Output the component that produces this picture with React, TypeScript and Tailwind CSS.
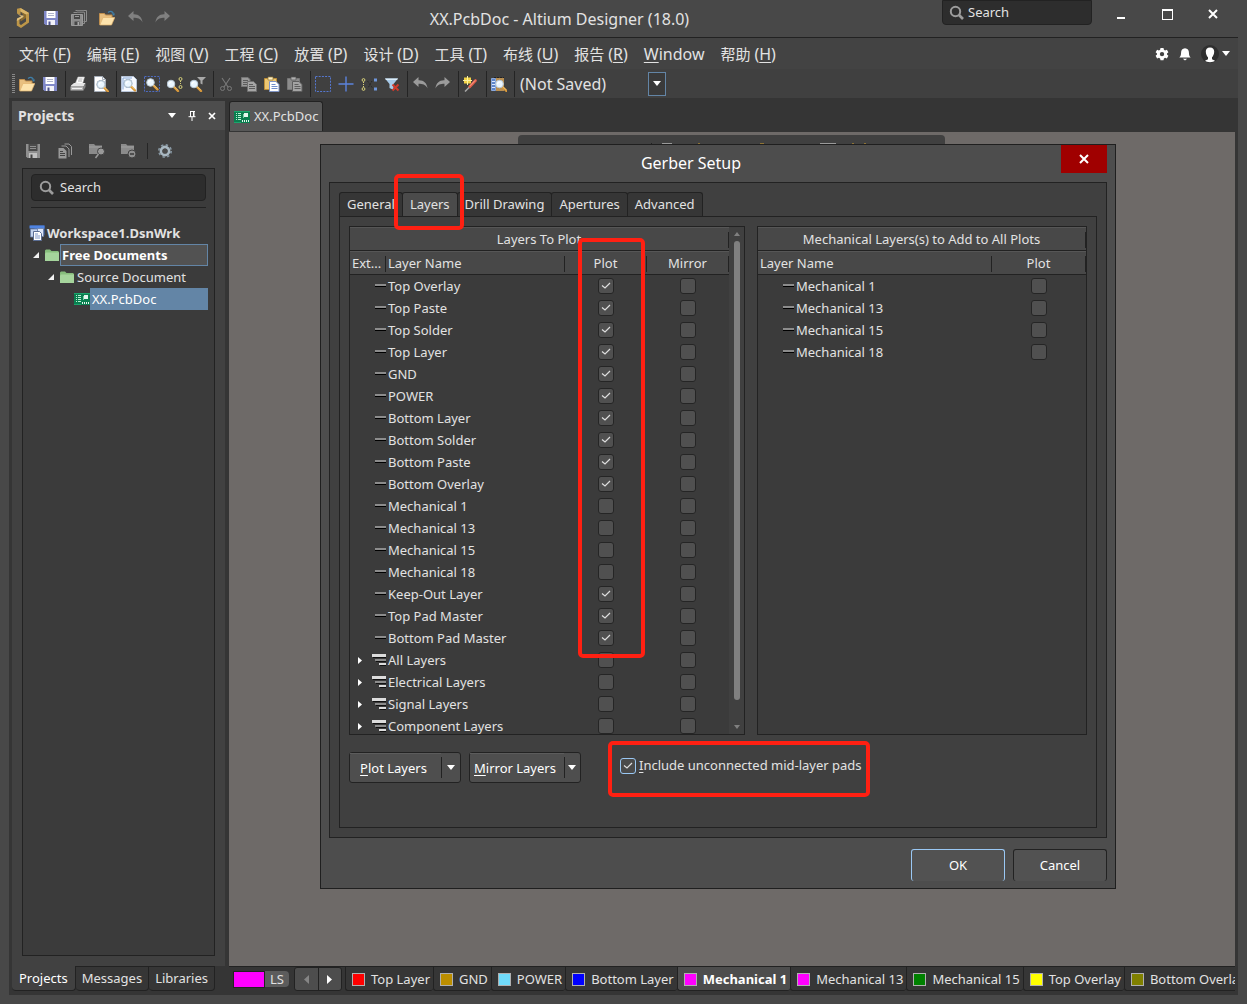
import { useState } from 'react'
import type { ReactNode } from 'react'
import clsx from 'clsx'

type Layer = { name: string; plot?: boolean; group?: boolean }

const layers: Layer[] = [
  { name: 'Top Overlay', plot: true },
  { name: 'Top Paste', plot: true },
  { name: 'Top Solder', plot: true },
  { name: 'Top Layer', plot: true },
  { name: 'GND', plot: true },
  { name: 'POWER', plot: true },
  { name: 'Bottom Layer', plot: true },
  { name: 'Bottom Solder', plot: true },
  { name: 'Bottom Paste', plot: true },
  { name: 'Bottom Overlay', plot: true },
  { name: 'Mechanical 1' },
  { name: 'Mechanical 13' },
  { name: 'Mechanical 15' },
  { name: 'Mechanical 18' },
  { name: 'Keep-Out Layer', plot: true },
  { name: 'Top Pad Master', plot: true },
  { name: 'Bottom Pad Master', plot: true },
  { name: 'All Layers', group: true },
  { name: 'Electrical Layers', group: true },
  { name: 'Signal Layers', group: true },
  { name: 'Component Layers', group: true },
]

const mechanical = ['Mechanical 1', 'Mechanical 13', 'Mechanical 15', 'Mechanical 18']

const menus = [
  ['文件', 'F'],
  ['编辑', 'E'],
  ['视图', 'V'],
  ['工程', 'C'],
  ['放置', 'P'],
  ['设计', 'D'],
  ['工具', 'T'],
  ['布线', 'U'],
  ['报告', 'R'],
  ['', 'Window'],
  ['帮助', 'H'],
]

const layerTabs = [
  { name: 'Top Layer', color: 'bg-[#ff0000]' },
  { name: 'GND', color: 'bg-[#bc8e00]' },
  { name: 'POWER', color: 'bg-[#70dbfa]' },
  { name: 'Bottom Layer', color: 'bg-[#0000ff]' },
  { name: 'Mechanical 1', color: 'bg-[#ff00ff]' },
  { name: 'Mechanical 13', color: 'bg-[#ff00ff]' },
  { name: 'Mechanical 15', color: 'bg-[#008000]' },
  { name: 'Top Overlay', color: 'bg-[#ffff00]' },
  { name: 'Bottom Overlay', color: 'bg-[#808000]' },
]

/* ---------- icons ---------- */

function Svg({ children, size = 16 }: { children: ReactNode; size?: number }) {
  return (
    <svg width={size} height={size} viewBox="0 0 16 16" fill="none" className="shrink-0" aria-hidden="true">
      {children}
    </svg>
  )
}

const Logo = () => (
  <svg width="14" height="20" viewBox="0 0 14 20" fill="none" aria-hidden="true">
    <path d="M1 .8L4.500 0 13 5v9.500L5 20 .8 17.500v-5L3.500 11v5L5 17l5-3.500V6.500L4.500 3.500V7L1 5.500z" fill="#bd9648" />
    <path d="M4.500 3.500l5.500 3v3.500L4.500 13.500v-2.500l3-2V7.500z" fill="#8a6a2c" />
    <path d="M1 5.500l3.500 1.700 3 .3v1.500l-4 2.500-2.700 1.500L1 10.500 5 8.500z" fill="#e3c27c" />
    <path d="M4.500 0L13 5l-3 1.500-5.500-3z" fill="#dab66a" />
  </svg>
)

const SaveIcon = ({ gray }: { gray?: boolean }) => (
  <Svg>
    <path d="M1 1h14v14H2.500L1 13.500z" fill={gray ? '#8f8f8f' : '#8088c8'} />
    <path d="M3.500 1h9v7h-9z" fill={gray ? '#4a4a4a' : '#fff'} />
    <path d="M5 3.500h6M5 5.500h6" stroke={gray ? '#8f8f8f' : '#b0b4cc'} />
    <path d="M4 10h8v5H4z" fill={gray ? '#c0c0c0' : '#f2f2f8'} />
    <path d="M5.500 11.500h2V15h-2z" fill={gray ? '#444' : '#4c528c'} />
  </Svg>
)

const SaveAllIcon = () => (
  <Svg>
    <path d="M4.500.5h11v11h-3" stroke="#8c8c8c" />
    <path d="M2.500 2.500h11v11h-2" stroke="#8c8c8c" />
    <path d="M6 2.500h7M6 1h7" stroke="#777" />
    <path d="M.5 4.500h11v11h-11z" fill="#8c8c8c" stroke="#9a9a9a" />
    <path d="M3 5h6v4H3zM3.500 11.500h5V15h-5z" fill="#474747" />
    <path d="M4 6.500h4" stroke="#999" />
    <path d="M6.500 12h1.500v3H6.500z" fill="#aaa" />
  </Svg>
)

const OpenIcon = () => (
  <Svg>
    <path d="M.5 14.500v-11h5l1 1.500h6.500v3" fill="#e8bf80" stroke="#c08f4e" />
    <path d="M.8 15L4 7.500h11.800L12.500 15z" fill="#fde3ad" stroke="#e2b56e" strokeWidth=".7" />
    <path d="M9 2.500Q12.500 0 14.500 3.500" stroke="#3f7ea8" strokeWidth="1.300" />
    <path d="M12.500 3.500h3.500L15 6z" fill="#3f7ea8" />
  </Svg>
)

const UndoIcon = ({ flip, light }: { flip?: boolean; light?: boolean }) => (
  <Svg>
    <g transform={flip ? 'matrix(-1 0 0 1 16 0)' : undefined}>
      <path d="M1 6L6.500 1v3.300C11.500 4 15 7 15.500 12.500 13.500 8.500 10.500 7.800 6.500 7.800V11z" fill={light ? '#9b9b9b' : '#808080'} />
    </g>
  </Svg>
)

const PrintIcon = () => (
  <Svg>
    <path d="M5.500 7L8 1h6.500l-2 7z" fill="#fff" stroke="#bbb" strokeWidth=".6" />
    <path d="M8.500 3h4M8 5h4" stroke="#999" strokeWidth=".8" />
    <path d="M1 9.500L4 7h11.500l-2 3.500H1z" fill="#e6e6e6" />
    <path d="M.5 10.500h13v4H.5z" fill="#b4b4b4" />
    <path d="M13.500 10.500l2-3.500v4l-2 3.500z" fill="#858585" />
    <path d="M2 12.500h10" stroke="#f2f2f2" />
  </Svg>
)

const Lens = ({ x = 0, y = 0 }: { x?: number; y?: number }) => (
  <g transform={`translate(${x} ${y})`}>
    <path d="M8 8l4.500 4.500" stroke="#d8993c" strokeWidth="2.400" strokeLinecap="round" />
    <path d="M8.500 7.800l3.500 3.500" stroke="#f4cf80" strokeWidth=".8" />
    <circle cx="5.500" cy="5.500" r="3.800" fill="#eaf6ff" stroke="#b9c9d6" strokeWidth="1" />
    <path d="M3.500 5.500q.5-2 2.500-2" stroke="#fff" strokeWidth="1.200" />
  </g>
)

const PreviewIcon = () => (
  <Svg>
    <path d="M1.500.5h8l3 3v12h-11z" fill="#fff" stroke="#a5adb8" />
    <path d="M9.500.5v3h3" stroke="#a5adb8" />
    <circle cx="8" cy="8.500" r="4.500" fill="#8d9bab" />
    <Lens x={2.500} y={3} />
  </Svg>
)

const ZoomFitIcon = () => (
  <Svg>
    <path d="M.5.5h12l3 3v12H.5z" fill="#f5f9ff" stroke="#b7c4d8" />
    <path d="M2 13.500V2h9" stroke="#86a7d8" />
    <circle cx="7" cy="7.500" r="4.500" fill="#8fa4bd" />
    <Lens x={1.500} y={2} />
  </Svg>
)

const ZoomAreaIcon = () => (
  <Svg>
    <path d="M.5.5h15v15H.5z" stroke="#4d6bc0" strokeDasharray="2 1.200" />
    <Lens x={1} y={1} />
  </Svg>
)

const ZoomSelectedIcon = () => (
  <Svg>
    <Lens x={-1.500} y={2.500} />
    <circle cx="13.500" cy="3" r="1.500" stroke="#d9d27a" />
    <circle cx="13.500" cy="11" r="1.500" stroke="#d9d27a" />
    <path d="M13.500 5v4" stroke="#d9d27a" strokeDasharray="1 1" />
  </Svg>
)

const ZoomFilterIcon = () => (
  <Svg>
    <Lens x={-1.500} y={2.500} />
    <path d="M7 1h9l-3.500 3.500v4l-2-1v-3z" fill="#a9a9a9" />
  </Svg>
)

const CutIcon = () => (
  <Svg>
    <path d="M4 2l6 9M12 2L6 11" stroke="#7a7a7a" strokeWidth="1.100" />
    <circle cx="4.500" cy="12.500" r="2" stroke="#7a7a7a" />
    <circle cx="11.500" cy="12.500" r="2" stroke="#7a7a7a" />
  </Svg>
)

const CopyIcon = () => (
  <Svg>
    <path d="M.5 1.500h6.500l2 2v7H.5z" fill="#9a9a9a" stroke="#777" />
    <path d="M2 4.500h5M2 6.500h5M2 8.500h4" stroke="#5c5c5c" />
    <path d="M6.500 5.500h6l3 3v7h-9z" fill="#a6a6a6" stroke="#707070" />
    <path d="M8 8.500h4M8 10.500h6M8 12.500h6" stroke="#5c5c5c" />
  </Svg>
)

const PasteIcon = ({ gray }: { gray?: boolean }) => (
  <Svg>
    <path d="M.5 2.500h12v11H.5z" fill={gray ? '#8c8c8c' : '#edc772'} stroke={gray ? '#777' : '#bd8f38'} />
    <path d="M4 1h5v3H4z" fill={gray ? '#b0b0b0' : '#fff3c8'} stroke={gray ? '#555' : '#8f7434'} strokeWidth=".7" />
    <path d="M5.500 5.500h6.500l3 3v7H5.500z" fill={gray ? '#a4a4a4' : '#fff'} stroke={gray ? '#5e5e5e' : '#7f94c4'} />
    <path d="M7.500 8.500h4M7.500 10.500h6M7.500 12.500h6" stroke={gray ? '#5e5e5e' : '#6f8dcb'} />
  </Svg>
)

const MarqueeIcon = () => (
  <Svg>
    <path d="M.5.5h15v15H.5z" stroke="#5577cf" strokeDasharray="2 1.200" />
  </Svg>
)

const CrossIcon = () => (
  <Svg>
    <path d="M8 .5v15M.5 8h15" stroke="#5b82dc" strokeWidth="1.400" />
  </Svg>
)

const NetsIcon = () => (
  <Svg>
    <circle cx="2.500" cy="4" r="1.400" stroke="#d9d27a" />
    <circle cx="2.500" cy="13" r="1.400" stroke="#d9d27a" />
    <path d="M2.500 6v5" stroke="#d9d27a" strokeDasharray="1 1" />
    <path d="M6.500 5l5 7M11 5l-4 7" stroke="#222" strokeDasharray="1 1" />
    <path d="M13 2.500h3v3h-3zM13 11.500h3v3h-3z" fill="#6e95da" />
  </Svg>
)

const ClearFilterIcon = () => (
  <Svg>
    <path d="M1 2.500h13L9.500 8v6l-4-2V8z" fill="#a8cbea" />
    <path d="M1 2.500h13l-1 1.500H2z" fill="#dceefb" />
    <path d="M8.500 8.500l6 6M14.500 8.500l-6 6" stroke="#d03a2c" strokeWidth="2" />
  </Svg>
)

const WandIcon = () => (
  <Svg>
    <path d="M1 1.500h7v6H1z" fill="#f3d445" />
    <path d="M4.500 0v9M0 4.500h9" stroke="#fff3a0" />
    <path d="M12.500 4.500L6.500 11" stroke="#e2604a" strokeWidth="2.600" strokeLinecap="round" />
    <path d="M6 11.500L2 15.500" stroke="#a8a8a8" strokeWidth="1.500" />
    <path d="M12 4.500L7 9.800" stroke="#f6a08e" />
  </Svg>
)

const BrowseIcon = () => (
  <Svg>
    <path d="M.5 2.500h4v12h-4z" fill="#5f86c9" stroke="#89a8dd" />
    <path d="M1 5.500h3M1 8.500h3M1 11.500h3" stroke="#dce8ff" />
    <path d="M5 2h8v13H5z" fill="#b98f52" />
    <path d="M3 1.500h10" stroke="#222" strokeDasharray="2 1" />
    <Lens x={3} y={2.500} />
  </Svg>
)

const PcbIcon = () => (
  <svg width="16" height="12" viewBox="0 0 16 12" className="shrink-0" aria-hidden="true">
    <path d="M0 0h16v12H0z" fill="#0a7f50" />
    <path d="M0 0h16v1H0zM0 11h7v1H0z" fill="#1aa56c" />
    <path d="M2 2.500h1M2 4.500h1M2 6.500h1M2 8.500h1M4 2.500h3M4 4.500h3M4 6.500h3M4 8.500h3" stroke="#b7f3d3" strokeWidth="1" />
    <path d="M10 2h4v4h-4z" fill="#e4f7ee" />
    <path d="M9 3h1v4H9z" fill="#7bd0a8" />
    <path d="M8.500 9v2M10.500 9v2M12.500 9v2M14.500 9v2" stroke="#e4f7ee" />
  </svg>
)

const FolderIcon = () => (
  <svg width="14" height="12" viewBox="0 0 14 12" className="shrink-0" aria-hidden="true">
    <path d="M0 1.500L1 .5h4L6.500 2H13l1 1v9H0z" fill="#86bd7c" />
    <path d="M1 3.500h13V12H0V4.500z" fill="#a5d49c" />
  </svg>
)

const WorkspaceIcon = () => (
  <Svg>
    <path d="M1 .5h14.500v10" fill="#3a66b8" />
    <path d="M.5.5h15v3H.5z" fill="#4f83e0" />
    <path d="M1.500 4h7v8h-7z" fill="#c3d3ee" stroke="#6b80a8" strokeWidth=".8" />
    <path d="M8.500 3.500h6v8h-6z" fill="#dbe5f7" stroke="#6b80a8" strokeWidth=".8" />
    <path d="M4.500 6.500h6l2 2v7h-8z" fill="#fff" stroke="#5a6d94" />
    <path d="M6 9h3M6 11h5M6 13h5" stroke="#7c95c7" />
  </Svg>
)

const DocsIcon = () => (
  <Svg>
    <path d="M7.500 1h4.500l2.500 2.500V12" stroke="#999" />
    <path d="M4.500 3h4.500l3 3v8" stroke="#999" />
    <path d="M1.500 5h5l3 3v7.500h-8z" fill="#999" />
    <path d="M3 8.500h3M3 10.500h5M3 12.500h5" stroke="#444" />
  </Svg>
)

const FolderToolIcon = ({ gear }: { gear?: boolean }) => (
  <Svg>
    <path d="M0 1h5l1.500 1.500H13V11H0z" fill="#8b8b8b" />
    <path d="M0 4h13" stroke="#a0a0a0" />
    {gear ? (
      <>
        <circle cx="11" cy="11" r="4" fill="#8f8f8f" stroke="#414141" />
        <path d="M9 11h4" stroke="#333" strokeWidth="1.400" />
      </>
    ) : (
      <>
        <circle cx="12" cy="8.500" r="3.500" fill="#999" stroke="#414141" />
        <path d="M9.500 11L6.500 15" stroke="#999" strokeWidth="1.600" />
      </>
    )}
  </Svg>
)

const GearIcon = () => (
  <Svg>
    <circle cx="8" cy="8" r="6.200" stroke="#8797a2" strokeWidth="1.600" strokeDasharray="2.435" />
    <circle cx="8" cy="8" r="4" stroke="#a9b8c2" strokeWidth="2.800" />
    <circle cx="8" cy="8" r="2.600" fill="#4a4a4a" />
  </Svg>
)

const CogIcon = () => (
  <Svg size={14}>
    <path
      d="M6.300 1h3.400l.5 2.100 1.300.8 2.100-.7 1.700 2.900L13.700 7.500v1.200l1.600 1.400-1.700 2.900-2.100-.7-1.300.8-.5 2.100H6.300l-.5-2.100-1.300-.8-2.100.7L.7 10.100l1.600-1.400V7.500L.7 6.100l1.700-2.900 2.100.7 1.300-.8z"
      fill="#fff"
    />
    <circle cx="8" cy="8.100" r="2.500" fill="#424242" />
  </Svg>
)

const BellIcon = () => (
  <Svg size={14}>
    <path d="M8 1.500c3 0 4.500 2.500 4.500 5 0 3 .8 4 2 5.500h-13c1.200-1.500 2-2.500 2-5.500 0-2.500 1.500-5 4.500-5z" fill="#fff" />
    <path d="M5.500 13.500h5L8 15.500z" fill="#fff" />
  </Svg>
)

const AvatarIcon = () => (
  <svg width="18" height="18" viewBox="0 0 18 18" aria-hidden="true">
    <circle cx="9" cy="9" r="9" fill="#2f2f2f" />
    <path d="M9 2.500c3 0 4.200 1.700 4.200 4 0 2.600-1.200 5-2.200 5.700v2l3 1.600c-1.500 1.800-8.500 1.800-10 0l3-1.600v-2C6 11.500 4.800 9.100 4.800 6.500c0-2.300 1.200-4 4.200-4z" fill="#fff" />
  </svg>
)

const SearchIcon = () => (
  <Svg>
    <circle cx="6.500" cy="6.500" r="4.700" stroke="#9c9c9c" strokeWidth="2" />
    <path d="M10 10l4 4" stroke="#9c9c9c" strokeWidth="2.600" />
  </Svg>
)

const CloseIcon = () => (
  <svg width="10" height="10" viewBox="0 0 10 10" aria-hidden="true">
    <path d="M1 1l8 8M9 1L1 9" stroke="#fff" strokeWidth="2" />
  </svg>
)

const SmallCloseIcon = () => (
  <svg width="8" height="8" viewBox="0 0 8 8" aria-hidden="true">
    <path d="M1 1l6 6M7 1L1 7" stroke="#fff" strokeWidth="1.700" />
  </svg>
)

const PinIcon = () => (
  <svg width="8" height="10" viewBox="0 0 8 10" aria-hidden="true">
    <path d="M2 .5h5M2.500 0v6M5.500 0v6M.5 5.700h7M4 6v4" stroke="#fff" />
    <path d="M5 0h1.500v6H5z" fill="#fff" />
  </svg>
)

const CaretDown = () => (
  <svg width="8" height="5" viewBox="0 0 8 5" className="shrink-0" aria-hidden="true">
    <path d="M0 0h8L4 5z" fill="#fff" />
  </svg>
)

const CaretOpen = () => (
  <svg width="6" height="6" viewBox="0 0 6 6" className="shrink-0" aria-hidden="true">
    <path d="M6 0v6H0z" fill="#f2f2f2" />
  </svg>
)

const CaretRight = () => (
  <svg width="4" height="7" viewBox="0 0 4 7" className="shrink-0" aria-hidden="true">
    <path d="M0 0l4 3.500L0 7z" fill="#fff" />
  </svg>
)

const NavArrow = ({ back }: { back?: boolean }) => (
  <svg width="5" height="9" viewBox="0 0 5 9" className="shrink-0" aria-hidden="true">
    <path d={back ? 'M5 0L0 4.500 5 9z' : 'M0 0l5 4.500L0 9z'} fill={back ? '#858585' : '#fff'} />
  </svg>
)

const ScrollArrow = ({ up }: { up?: boolean }) => (
  <svg width="6" height="4" viewBox="0 0 6 4" className="shrink-0" aria-hidden="true">
    <path d={up ? 'M0 4h6L3 0z' : 'M0 0h6L3 4z'} fill="#808080" />
  </svg>
)

const LayerIcon = () => (
  <svg width="14" height="12" viewBox="0 0 14 12" className="shrink-0" aria-hidden="true">
    <path d="M3 4h11v2H3z" fill="#8c8c8c" />
    <path d="M3 6h11v1H3z" fill="#000" />
  </svg>
)

const LayerGroupIcon = () => (
  <svg width="14" height="12" viewBox="0 0 14 12" className="shrink-0" aria-hidden="true">
    <path d="M0 0h14v3H0zM7 9h7v2H7z" fill="#dcdcdc" />
    <path d="M3 5h11v2H3z" fill="#8c8c8c" />
    <path d="M1 3h13v1H1zM4 7h10v1H4zM8 11h6v1H8z" fill="#111" />
  </svg>
)

/* ---------- shared controls ---------- */

function ToolGroup({ items }: { items: [string, ReactNode][] }) {
  return (
    <>
      {items.map(([label, icon]) => (
        <button key={label} aria-label={label} className="flex h-6 w-[23px] items-center justify-center">
          {icon}
        </button>
      ))}
      <span className="ml-1 h-[26px] w-px bg-[#242424]" />
    </>
  )
}

function Check({ label, id, checked, focused }: { label?: string; id?: string; checked?: boolean; focused?: boolean }) {
  return (
    <span className="inline-grid size-4 shrink-0 align-top">
      <input
        id={id}
        type="checkbox"
        aria-label={label}
        defaultChecked={checked}
        className={clsx(
          'peer col-start-1 row-start-1 m-0 size-4 appearance-none rounded-[3px] border',
          focused ? 'border-[#9ac8f4] bg-[#4a4a4a]' : 'border-[#252525] bg-[#505050]',
        )}
      />
      <svg viewBox="0 0 16 16" className="pointer-events-none invisible col-start-1 row-start-1 size-4 peer-checked:visible" fill="none" aria-hidden="true">
        <path d="M4 7.500l3 2.500 5-5" stroke="#dedede" strokeWidth="1.200" />
      </svg>
    </span>
  )
}

function HeadCell({ children, center }: { children: ReactNode; center?: boolean }) {
  return (
    <div className="flex h-[23px] items-center border-t border-[#565656] pt-px">
      <span className={clsx('min-w-0 flex-1 whitespace-nowrap', center ? 'text-center' : 'pl-0.5')}>{children}</span>
      <span className="h-4 w-px bg-[#222]" />
    </div>
  )
}

function SearchBox({ id, className }: { id: string; className: string }) {
  return (
    <label htmlFor={id} className={clsx('flex items-center border border-[#222] bg-[#2d2d2d]', className)}>
      <SearchIcon />
      <input id={id} aria-label="Search" placeholder="Search" className="w-0 flex-1 bg-transparent outline-none placeholder:text-[#e2e2e2]" />
    </label>
  )
}

function SplitButton({ hot, rest }: { hot: string; rest: string }) {
  return (
    <div className="flex h-[31px] w-28 rounded-[3px] border border-[#222] bg-[#4e4e4e] text-white">
      <button className="flex-1 whitespace-nowrap border-t border-[#5c5c5c] pt-px pr-2 pl-1">
        <u className="underline-offset-2">{hot}</u>
        {rest}
      </button>
      <button aria-label={`${hot}${rest} options`} className="my-1 flex w-[19px] items-center justify-center border-l border-[#222] pr-px">
        <CaretDown />
      </button>
    </div>
  )
}

/* ---------- window parts ---------- */

function TitleBar() {
  const actions: [string, ReactNode][] = [
    ['Altium', <Logo />],
    ['Save', <SaveIcon />],
    ['Save all', <SaveAllIcon />],
    ['Open', <OpenIcon />],
    ['Undo', <UndoIcon />],
    ['Redo', <UndoIcon flip />],
  ]
  return (
    <header className="flex h-[37px] shrink-0 items-start pr-0.5">
      {actions.map(([label, icon]) => (
        <button key={label} aria-label={label} className="flex h-9 w-7 shrink-0 items-center justify-center">
          {icon}
        </button>
      ))}
      <h1 className="flex-1 truncate pt-[7px] text-center text-base leading-6">XX.PcbDoc - Altium Designer (18.0)</h1>
      <SearchBox id="global-search" className="h-[25px] w-[150px] gap-[3px] rounded-b px-1.5" />
      <div className="ml-1.5 flex">
        <button aria-label="Minimize" className="flex h-7 w-[46px] items-center justify-center pt-2">
          <span className="h-0.5 w-2 bg-white" />
        </button>
        <button aria-label="Maximize" className="flex h-7 w-[46px] items-center justify-center">
          <span className="h-[11px] w-[11px] border border-t-2 border-white" />
        </button>
        <button aria-label="Close" className="flex h-7 w-[46px] items-center justify-center">
          <CloseIcon />
        </button>
      </div>
    </header>
  )
}

function MenuBar() {
  return (
    <nav className="flex h-[31px] shrink-0 items-center gap-4 bg-[#434343] pr-2 pl-2.5 text-base">
      {menus.map(([name, key]) => (
        <button key={key} className="whitespace-nowrap">
          {name ? (
            <>
              <span className="text-[15px]">{name} </span>(<u className="underline-offset-2">{key}</u>)
            </>
          ) : (
            <>
              <u className="underline-offset-2">{key[0]}</u>
              {key.slice(1)}
            </>
          )}
        </button>
      ))}
      <div className="ml-auto flex items-center gap-[9px]">
        <button aria-label="Settings"><CogIcon /></button>
        <button aria-label="Notifications"><BellIcon /></button>
        <button aria-label="Account" className="flex items-center gap-[3px]">
          <AvatarIcon />
          <CaretDown />
        </button>
      </div>
    </nav>
  )
}

function Toolbar() {
  return (
    <div className="flex h-[29px] shrink-0 items-center bg-[#404040]">
      <span className="ml-[3px] h-5 w-[3px] shrink-0 bg-[repeating-linear-gradient(#888_0_1px,transparent_1px_2px)]" />
      <ToolGroup items={[['Open file', <OpenIcon />], ['Save file', <SaveIcon />]]} />
      <ToolGroup items={[['Print', <PrintIcon />], ['Print preview', <PreviewIcon />]]} />
      <ToolGroup
        items={[
          ['Fit document', <ZoomFitIcon />],
          ['Zoom area', <ZoomAreaIcon />],
          ['Zoom selected', <ZoomSelectedIcon />],
          ['Zoom filtered', <ZoomFilterIcon />],
        ]}
      />
      <ToolGroup
        items={[
          ['Cut', <CutIcon />],
          ['Copy', <CopyIcon />],
          ['Paste', <PasteIcon />],
          ['Paste special', <PasteIcon gray />],
        ]}
      />
      <ToolGroup
        items={[
          ['Select area', <MarqueeIcon />],
          ['Move', <CrossIcon />],
          ['Deselect', <NetsIcon />],
          ['Clear filter', <ClearFilterIcon />],
        ]}
      />
      <ToolGroup items={[['Undo edit', <UndoIcon light />], ['Redo edit', <UndoIcon flip light />]]} />
      <ToolGroup items={[['Cross probe', <WandIcon />]]} />
      <ToolGroup items={[['Browse', <BrowseIcon />]]} />
      <label className="ml-[5px] grid w-[146px] items-center">
        <select aria-label="Saved view" className="col-start-1 row-start-1 h-6 appearance-none bg-transparent text-base leading-6 outline-none">
          <option>(Not Saved)</option>
        </select>
        <span className="pointer-events-none col-start-1 row-start-1 flex h-6 w-[18px] items-center justify-center justify-self-end border border-[#6385a6] bg-[#3a3a3a]">
          <CaretDown />
        </span>
      </label>
    </div>
  )
}

function ProjectsPanel() {
  return (
    <aside className="flex w-[213px] shrink-0 flex-col">
      <div className="flex flex-1 flex-col bg-[#414141]">
        <div className="flex h-[29px] items-center bg-[#4d4d4d] pr-[9px] pl-1.5">
          <h2 className="flex-1 text-sm font-bold">Projects</h2>
          <div className="flex items-center gap-3">
            <button aria-label="Panel menu"><CaretDown /></button>
            <button aria-label="Pin panel"><PinIcon /></button>
            <button aria-label="Close panel"><SmallCloseIcon /></button>
          </div>
        </div>
        <div className="flex h-[38px] items-center pt-1 pl-[13px]">
          <button aria-label="Save project" className="mr-4"><SaveIcon gray /></button>
          <button aria-label="Compile" className="mr-4"><DocsIcon /></button>
          <button aria-label="Explore folder" className="mr-4"><FolderToolIcon /></button>
          <button aria-label="Folder options" className="mr-2.5"><FolderToolIcon gear /></button>
          <span className="mr-[9px] h-4 w-px bg-[#262626]" />
          <button aria-label="Panel settings"><GearIcon /></button>
        </div>
        <div className="mx-2.5 mb-2.5 flex-1 border border-[#222] bg-[#3b3b3b] pt-[5px]">
          <div className="mx-2 border-b border-[#222] pb-1.5">
            <SearchBox id="project-search" className="h-[27px] gap-[5px] rounded px-[7px]" />
          </div>
          <ul className="mt-3.5 mr-1.5 text-[13px] leading-[22px] whitespace-nowrap">
            <li className="flex h-[22px] items-center gap-0.5 pl-1.5 font-bold">
              <WorkspaceIcon />
              Workspace1.DsnWrk
            </li>
            <li className="flex h-[22px] items-center pl-2.5 font-bold text-white">
              <CaretOpen />
              <span className="mr-px ml-1.5"><FolderIcon /></span>
              <span className="flex h-[22px] flex-1 items-center border border-[#6385a6] bg-[#525252] pl-px">Free Documents</span>
            </li>
            <li className="flex h-[22px] items-center pl-[25px]">
              <CaretOpen />
              <span className="mr-[3px] ml-1.5"><FolderIcon /></span>
              Source Document
            </li>
            <li className="flex h-[22px] items-center pl-[51px] text-white">
              <PcbIcon />
              <span className="flex-1 bg-[#6385a6] pl-0.5">XX.PcbDoc</span>
            </li>
          </ul>
        </div>
      </div>
      <div role="tablist" className="flex h-[25px] shrink-0 text-[13px]">
        {['Projects', 'Messages', 'Libraries'].map((tab, i) => (
          <button
            key={tab}
            role="tab"
            aria-selected={i === 0}
            className={clsx(
              'rounded-b border-r border-b border-[#222] pt-px',
              i === 0 ? 'bg-[#414141] px-[7px] text-white' : 'border-t bg-[#363636] px-1.5',
            )}
          >
            {tab}
          </button>
        ))}
      </div>
    </aside>
  )
}

function LayersTable() {
  return (
    <div className="flex w-[396px] border border-[#222] bg-[#3b3b3b]">
      <div className="h-[507px] flex-1 overflow-hidden">
        <table className="w-full table-fixed border-collapse">
          <colgroup>
            <col className="w-9" />
            <col className="w-[179px]" />
            <col className="w-[82px]" />
            <col />
          </colgroup>
          <thead className="bg-[#484848]">
            <tr className="border-b border-[#222]">
              <th colSpan={4} className="p-0 font-normal"><HeadCell center>Layers To Plot</HeadCell></th>
            </tr>
            <tr className="border-b border-[#222] text-left">
              <th className="p-0 font-normal"><HeadCell>Ext...</HeadCell></th>
              <th className="p-0 font-normal"><HeadCell>Layer Name</HeadCell></th>
              <th className="p-0 font-normal"><HeadCell center>Plot</HeadCell></th>
              <th className="p-0 font-normal"><HeadCell center>Mirror</HeadCell></th>
            </tr>
          </thead>
          <tbody>
            {layers.map((layer) => (
              <tr key={layer.name} className="h-[22px]">
                <td className="p-0">
                  <div className="flex items-center justify-between pl-2">
                    {layer.group ? <CaretRight /> : <span />}
                    {layer.group ? <LayerGroupIcon /> : <LayerIcon />}
                  </div>
                </td>
                <td className="p-0 pl-0.5 leading-[22px]">{layer.name}</td>
                <td className="p-0 text-center leading-4"><Check label={`Plot ${layer.name}`} checked={layer.plot} /></td>
                <td className="p-0 text-center leading-4"><Check label={`Mirror ${layer.name}`} /></td>
              </tr>
            ))}
          </tbody>
        </table>
      </div>
      <div className="flex w-[15px] flex-col items-center bg-[#404040] py-[5px]">
        <ScrollArrow up />
        <span className="my-[5px] w-1.5 flex-1 rounded-full bg-[#808080]" />
        <span className="mt-5"><ScrollArrow /></span>
      </div>
    </div>
  )
}

function MechanicalTable() {
  return (
    <div className="flex-1 border border-[#222] bg-[#3b3b3b]">
      <table className="w-full table-fixed border-collapse">
        <colgroup>
          <col />
          <col className="w-[94px]" />
        </colgroup>
        <thead className="bg-[#484848]">
          <tr className="border-b border-[#222]">
            <th colSpan={2} className="p-0 font-normal"><HeadCell center>Mechanical Layers(s) to Add to All Plots</HeadCell></th>
          </tr>
          <tr className="border-b border-[#222] text-left">
            <th className="p-0 font-normal"><HeadCell>Layer Name</HeadCell></th>
            <th className="p-0 font-normal"><HeadCell center>Plot</HeadCell></th>
          </tr>
        </thead>
        <tbody>
          {mechanical.map((name) => (
            <tr key={name} className="h-[22px]">
              <td className="p-0">
                <div className="flex items-center gap-0.5 pl-[22px] leading-[22px]">
                  <LayerIcon />
                  {name}
                </div>
              </td>
              <td className="p-0 text-center leading-4"><Check label={`Add ${name}`} /></td>
            </tr>
          ))}
        </tbody>
      </table>
    </div>
  )
}

function GerberDialog() {
  const [tab, setTab] = useState('Layers')

  return (
    <div role="dialog" aria-label="Gerber Setup" className="absolute top-3 left-[91px] w-[796px] border border-[#1f1f1f] bg-[#4d4d4d] text-[13px]">
      <div className="flex h-[37px] items-start pr-2">
        <h2 className="flex-1 text-center text-base leading-9 text-white">Gerber Setup</h2>
        <button aria-label="Close dialog" className="flex h-7 w-[46px] items-center justify-center bg-[#a00000]">
          <CloseIcon />
        </button>
      </div>

      <div className="mx-2 border border-[#222] bg-[#404040] p-[9px]">
        <div role="tablist" className="flex h-6">
          {['General', 'Layers', 'Drill Drawing', 'Apertures', 'Advanced'].map((name) => (
            <button
              key={name}
              role="tab"
              aria-selected={tab === name}
              onClick={() => setTab(name)}
              className={clsx(
                'rounded-t-[3px] border border-b-0 border-[#222] px-[7px] whitespace-nowrap not-first:-ml-px',
                tab === name ? 'bg-[#4b4b4b]' : 'bg-[#363636]',
              )}
            >
              {name}
            </button>
          ))}
        </div>
        <div className="border border-[#222] p-[9px] pb-11">
          <div className="flex gap-3">
            <LayersTable />
            <MechanicalTable />
          </div>
          <div className="mt-[17px] flex gap-2">
            <SplitButton hot="P" rest="lot Layers" />
            <SplitButton hot="M" rest="irror Layers" />
            <div className="ml-[31px] flex h-7 items-center gap-[3px]">
              <Check id="mid-layer-pads" checked focused />
              <label htmlFor="mid-layer-pads">
                <u className="underline-offset-2">I</u>nclude unconnected mid-layer pads
              </label>
            </div>
          </div>
        </div>
      </div>

      <div className="flex justify-end gap-2 px-2 pt-[11px] pb-[7px] text-white">
        <button className="h-8 w-[94px] rounded-[3px] border border-b-0 border-[#9ac8f4] bg-[#525252]">OK</button>
        <button className="h-8 w-[94px] rounded-[3px] border border-b-0 border-[#222] bg-[#525252]">Cancel</button>
      </div>

      {/* callout frames */}
      <span className="pointer-events-none absolute top-[29px] left-[73px] h-[56px] w-[70px] rounded-[5px] border-4 border-[#ff2012]" />
      <span className="pointer-events-none absolute top-[93px] left-[257px] h-[420px] w-[67px] rounded-[5px] border-4 border-[#ff2012]" />
      <span className="pointer-events-none absolute top-[596px] left-[287px] h-[56px] w-[262px] rounded-[5px] border-4 border-[#ff2012]" />
    </div>
  )
}

function LayerBar() {
  return (
    <div className="flex h-[25px] shrink-0 overflow-hidden border-t border-[#222] text-[13px]">
      <div className="flex items-center pl-1">
        <span className="h-[17px] w-8 border border-[#222] bg-[#ff00ff]" />
        <button className="h-4 w-6 rounded-r bg-[#5c5c5c] leading-4">LS</button>
      </div>
      <div className="ml-[5px] flex h-6 w-12 shrink-0 rounded-[3px] border border-[#222] bg-[#4d4d4d]">
        <button aria-label="Previous layer" className="flex flex-1 items-center justify-center border-r border-[#222]">
          <NavArrow back />
        </button>
        <button aria-label="Next layer" className="flex flex-1 items-center justify-center">
          <NavArrow />
        </button>
      </div>
      <div role="tablist" className="ml-[3px] flex h-6 min-w-0 flex-1 overflow-hidden">
        {layerTabs.map(({ name, color }) => {
          const active = name === 'Mechanical 1'
          return (
            <button
              key={name}
              role="tab"
              aria-selected={active}
              className={clsx(
                'flex shrink-0 items-center gap-1.5 rounded-b-[3px] border-b border-l border-[#222] pt-0.5 pr-[3px] pl-1.5 whitespace-nowrap',
                active ? 'bg-[#4d4d4d] font-bold text-white' : 'bg-[#363636]',
              )}
            >
              <span className={clsx('size-[13px] border border-[#b0b0b0]', color)} />
              {name}
            </button>
          )
        })}
      </div>
    </div>
  )
}

export default function App() {
  return (
    <div className="flex h-screen min-h-[800px] w-full flex-col overflow-hidden bg-[#484848] px-[9px] pb-[9px] font-['Noto_Sans','Noto_Sans_CJK_SC',sans-serif] text-[13px] text-[#e2e2e2]">
      <TitleBar />
      <div className="flex flex-1 flex-col border-t border-[#222] bg-[#353535]">
        <MenuBar />
        <Toolbar />
        <div className="flex flex-1 gap-1 px-[3px] pt-[3px] pb-1">
          <ProjectsPanel />
          <main className="flex min-w-0 flex-1 flex-col">
            <div className="flex h-[31px] shrink-0 items-start">
              <button className="flex h-[30px] items-center gap-1 rounded-t-[3px] border border-b-0 border-[#222] bg-[#575757] px-1">
                <PcbIcon />
                XX.PcbDoc
              </button>
            </div>
            <div className="relative flex-1 bg-[#6e6a68]">
              {/* floating tool strip, mostly hidden by the dialog */}
              <div className="absolute top-[3px] left-[289px] flex h-3 w-[427px] items-start rounded-t bg-[#404040] pt-2">
                <span className="ml-[133px] h-1 w-px bg-[#222]" />
                <span className="ml-2.5 h-1 w-2.5 bg-[#9a9a9a]" />
                <span className="ml-[26px] h-1 w-0.5 bg-[#8f7434]" />
                <span className="ml-[60px] h-1 w-1 bg-[#8f7434]" />
                <span className="ml-14 h-1 w-4 bg-[#9a9a9a]" />
                <span className="ml-4 h-1 w-0.5 bg-[#8f7434]" />
                <span className="ml-2.5 h-1 w-0.5 bg-[#8f7434]" />
              </div>
              <GerberDialog />
            </div>
            <LayerBar />
          </main>
        </div>
      </div>
    </div>
  )
}
